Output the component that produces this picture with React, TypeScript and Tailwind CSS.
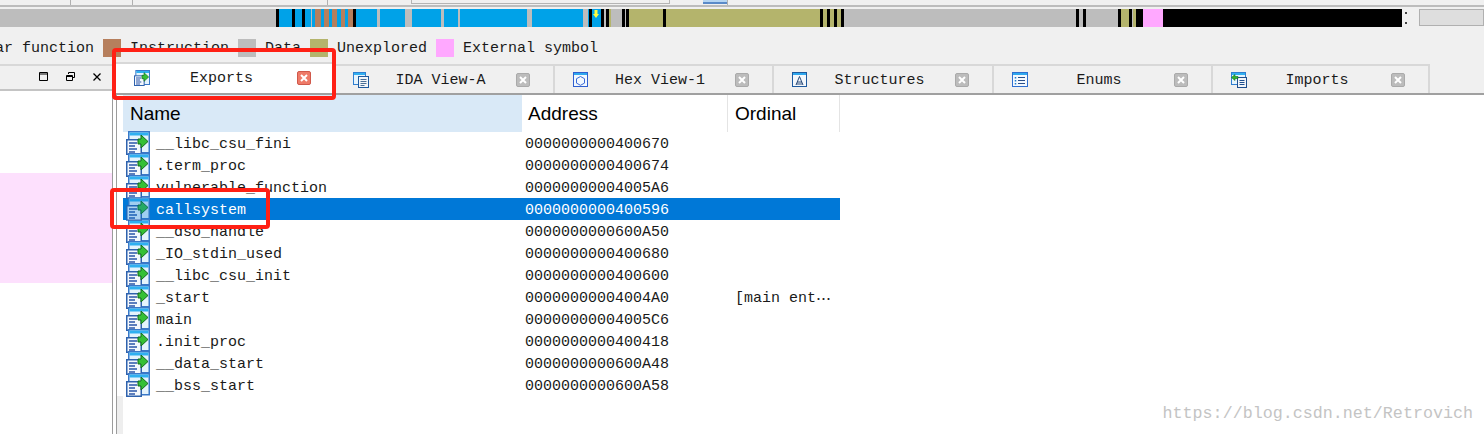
const BLUE = '#00a2e8';
const GRAY = '#bdbdbd';
const BROWN = '#b67f5d';
const KHAKI = '#b4b46c';
const PINK = '#ffa8ff';
const BLACK = '#000000';

// colour, end x of each navigator band
const bands: [string, number][] = [
  [GRAY, 276], [BLACK, 279], [BLUE, 292], [BLACK, 295], [BLUE, 302], [BLACK, 305], [BLUE, 311], [GRAY, 312],
  [BLUE, 315], [BROWN, 321], [BLUE, 324], [BROWN, 329], [BLUE, 332], [BROWN, 337], [BLUE, 341], [BROWN, 345],
  [BLUE, 348], [BROWN, 353], [BLACK, 356], [BLUE, 377], [GRAY, 380], [BLUE, 405], [GRAY, 412], [BLUE, 441],
  [GRAY, 444], [BLUE, 458], [GRAY, 460], [BLUE, 527], [GRAY, 532], [BLUE, 583], [GRAY, 588], [BLUE, 589],
  [BLACK, 592], [BLUE, 601], [BLACK, 604], [GRAY, 606], [BLACK, 609], [KHAKI, 611], [GRAY, 622], [BLACK, 625],
  [GRAY, 626], [BLACK, 629], [KHAKI, 663], [BLACK, 666], [KHAKI, 820], [BLACK, 823], [KHAKI, 827], [BLACK, 830],
  [KHAKI, 834], [BLACK, 837], [KHAKI, 841], [BLACK, 844], [GRAY, 1076], [BLACK, 1079], [GRAY, 1083], [BLACK, 1086],
  [GRAY, 1118], [BLACK, 1121], [KHAKI, 1129], [BLACK, 1132], [GRAY, 1133], [KHAKI, 1136], [BLACK, 1143],
  [PINK, 1163], [BLACK, 1402],
];

const legend = [
  { label: 'Regular function', color: '' },
  { label: 'Instruction', color: BROWN },
  { label: 'Data', color: GRAY },
  { label: 'Unexplored', color: KHAKI },
  { label: 'External symbol', color: PINK },
];

const rows = [
  { name: '__libc_csu_fini', address: '0000000000400670' },
  { name: '.term_proc', address: '0000000000400674' },
  { name: 'vulnerable_function', address: '00000000004005A6' },
  { name: 'callsystem', address: '0000000000400596', selected: true },
  { name: '__dso_handle', address: '0000000000600A50' },
  { name: '_IO_stdin_used', address: '0000000000400680' },
  { name: '__libc_csu_init', address: '0000000000400600' },
  { name: '_start', address: '00000000004004A0', ordinal: '[main ent' },
  { name: 'main', address: '00000000004005C6' },
  { name: '.init_proc', address: '0000000000400418' },
  { name: '__data_start', address: '0000000000600A48' },
  { name: '__bss_start', address: '0000000000600A58' },
];

function ExportIcon({ size = 24, selected = false }: { size?: number; selected?: boolean }) {
  return (
    <svg width={size} height={size} viewBox="0 0 24 24" className={selected ? 'shrink-0 opacity-70' : 'shrink-0'}>
      <rect x="2.750" y="0.750" width="20.500" height="21" fill="#e4f3fc" stroke="#3a78c8" strokeWidth="1.500" />
      <rect x="3.500" y="1.500" width="19" height="3" fill="#2fb0f0" />
      <rect x="0.750" y="8.750" width="14.500" height="14.500" fill="#f4f8fc" stroke="#2f62ad" strokeWidth="1.500" />
      <path d="M3 12h8M3 15h6M3 18h8M3 21h6" stroke="#2a55a8" strokeWidth="1.500" />
      <path d="M12 8h3V4l7 6.500L15 17v-4h-3z" fill="#35c035" stroke="#126b1c" />
    </svg>
  );
}

function WindowIcon({ kind }: { kind: string }) {
  if (kind === 'doc') {
    return (
      <svg width="16" height="16" viewBox="0 0 16 16" className="shrink-0">
        <rect x="0.500" y="0.500" width="12" height="12" fill="#e6f4fd" stroke="#2f7fd0" />
        <rect x="1" y="1" width="11" height="2" fill="#32b0f0" />
        <rect x="5.500" y="4.500" width="10" height="11" fill="#f3f6f9" stroke="#1f5a9e" />
        <path d="M7.500 7.500h6M7.500 9.500h6M7.500 11.500h6M7.500 13.500h4" stroke="#4a6f96" />
      </svg>
    );
  }
  if (kind === 'hex') {
    return (
      <svg width="16" height="16" viewBox="0 0 16 16" className="shrink-0">
        <rect x="0.500" y="0.500" width="14" height="14" fill="#f2f8fe" stroke="#2f5fd0" />
        <rect x="1" y="1" width="13" height="2" fill="#2fa8ee" />
        <path d="M7.500 4.500l4 2.200v4.400l-4 2.200-4-2.200V6.700z" fill="none" stroke="#3a6ad8" />
      </svg>
    );
  }
  if (kind === 'struct') {
    return (
      <svg width="16" height="16" viewBox="0 0 16 16" className="shrink-0">
        <rect x="0.500" y="0.500" width="14" height="14" fill="#f4f8fc" stroke="#1f5a9e" />
        <rect x="1" y="1" width="13" height="2" fill="#2fa8ee" />
        <path d="M4 13L7.500 4.500 11 13M5 10h5M4.500 12h6" fill="none" stroke="#2a4a78" />
      </svg>
    );
  }
  if (kind === 'enum') {
    return (
      <svg width="16" height="16" viewBox="0 0 16 16" className="shrink-0">
        <rect x="0.500" y="0.500" width="15" height="14" fill="#f4f9fe" stroke="#2f6fd0" />
        <rect x="1" y="1" width="14" height="2" fill="#2fa8ee" />
        <path d="M3.500 5v1.500M3.500 8v1.500M3.500 11v1.500" stroke="#1f7fd0" strokeWidth="1.500" />
        <path d="M6 5.500h7M6 8.500h7M6 11.500h7" stroke="#2a4f8a" />
      </svg>
    );
  }
  if (kind === 'imports') {
    return (
      <svg width="16" height="16" viewBox="0 0 16 16" className="shrink-0">
        <rect x="0.500" y="0.500" width="14" height="12" fill="#e6f4fd" stroke="#2f7fd0" />
        <rect x="1" y="1" width="13" height="2" fill="#32b0f0" />
        <rect x="6.500" y="5.500" width="9" height="10" fill="#f3f6f9" stroke="#1f4f8e" />
        <path d="M8.500 8.500h5M8.500 10.500h5M8.500 12.500h5" stroke="#1f4f8e" />
        <path d="M7 4.500H4V2.500L0.500 5.500 4 8.500V6.500H7z" fill="#2fb52f" stroke="#126b1c" strokeWidth="0.600" />
      </svg>
    );
  }
  return <ExportIcon size={16} />;
}

function CloseBox({ active = false }: { active?: boolean }) {
  return (
    <span
      className={
        active
          ? 'flex h-[14px] w-[14px] shrink-0 items-center justify-center rounded-[2px] border border-[#d0584a] bg-[#ee7a68]'
          : 'flex h-[14px] w-[14px] shrink-0 items-center justify-center rounded-[2px] border border-[#aaaaaa] bg-[#bcbcbc]'
      }
    >
      <svg width="8" height="8" viewBox="0 0 8 8">
        <path d="M1 1l6 6M7 1L1 7" stroke="#ffffff" strokeWidth="2" />
      </svg>
    </span>
  );
}

function Tab({ label, kind, width, active = false }: { label: string; kind: string; width: string; active?: boolean }) {
  return (
    <div
      className={
        active
          ? `flex h-[33px] ${width} items-center border-t-2 border-[#d8d8d8] bg-white pb-[3px] pl-[19px] pr-[24px]`
          : `flex h-[31px] ${width} items-center border-r-2 border-t-2 border-[#d8d8d8] pb-[1px] pl-[18px] pr-[23px]`
      }
    >
      <WindowIcon kind={kind} />
      <span className="flex-1 pr-[4px] text-center text-[15px] leading-none text-[#1a1a1a]">{label}</span>
      <CloseBox active={active} />
    </div>
  );
}

export default function App() {
  let prev = 0;
  const segments = bands.map(([color, end]) => {
    const width = end - prev;
    prev = end;
    return { color, width };
  });

  return (
    <div className="relative h-[434px] w-[1484px] overflow-hidden bg-[#f0f0f0] font-['Liberation_Mono',monospace] text-[15px] text-[#1a1a1a]">
      {/* top toolbar remains */}
      <div className="flex h-[7px] border-b-2 border-[#bcbcbc]">
        <div className="h-[5px] w-[71px] border-r border-[#b0b0b0]" />
        <div className="h-[5px] w-[62px] border-r border-[#b0b0b0]" />
        <div className="h-[5px] w-[195px] border-r border-[#b0b0b0]" />
        <div className="h-[4px] w-[83px]" />
        <div className="h-[4px] w-[259px] border-x border-b border-[#b4b4b4]" />
        <div className="h-[4px] w-[33px]" />
        <div className="h-[4px] w-[24px] border-b-2 border-[#5a8ac8] bg-[#b5d5f2]" />
        <div className="h-[5px] w-[1px] bg-[#b0b0b0]" />
      </div>

      {/* navigator */}
      <div className="relative mt-[2px] flex h-[18px]">
        {segments.map((seg, i) => (
          <div key={i} className="h-full" style={{ width: seg.width, backgroundColor: seg.color }} />
        ))}
        <div className="ml-[3px] flex h-full w-[2px] flex-col justify-between py-[3px]">
          <div className="h-[2px] w-[2px] bg-[#444444]" />
          <div className="h-[2px] w-[2px] bg-[#444444]" />
        </div>
        <div className="ml-[12px] h-[17px] flex-1 border border-[#b0b0b0] bg-[#dedede]" />
        <svg width="6" height="8" viewBox="0 0 6 8" className="absolute left-[593px] top-[1px]">
          <path d="M1.500 0h3v4H6L3 8 0 4h1.500z" fill="#ffff40" />
        </svg>
      </div>

      {/* legend */}
      <div className="ml-[-50px] flex h-[37px] items-center whitespace-nowrap pt-[5px]">
        {legend.map((item) => (
          <div key={item.label} className="flex items-center">
            {item.color && (
              <span className="mx-[9px] h-[18px] w-[18px]" style={{ backgroundColor: item.color }} />
            )}
            <span className="leading-none">{item.label}</span>
          </div>
        ))}
      </div>

      <div className="flex h-[370px]">
        {/* left pane */}
        <div className="flex w-[112px] flex-col">
          <div className="flex h-[27px] items-center justify-end gap-[18px] border-b-2 border-t-2 border-b-[#c4c4c4] border-t-[#d8d8d8] pb-[2px] pr-[11px]">
            <svg width="9" height="9" viewBox="0 0 9 9">
              <path d="M.5.500h8v8h-8zM.5 2h8" fill="none" stroke="#000000" />
            </svg>
            <svg width="9" height="9" viewBox="0 0 9 9">
              <path d="M2.500 2V.500h6v5H7M.5 3.500h6v5h-6zM.5 4.500h6" fill="none" stroke="#000000" />
            </svg>
            <svg width="8" height="8" viewBox="0 0 8 8">
              <path d="M.5.500l7 7M7.500.500l-7 7" stroke="#000000" strokeWidth="1.300" />
            </svg>
          </div>
          <div className="flex-1 bg-white pt-[82px]">
            <div className="h-[110px] bg-[#fde0fd]" />
          </div>
        </div>

        {/* right pane */}
        <div className="flex flex-1 flex-col">
          <div className="relative z-10 -mt-[2px] flex h-[33px] items-end">
            <div className="absolute inset-x-0 bottom-0 h-[2px] bg-[#a0a0a0]" />
            <div className="w-[3px]" />
            <Tab label="Exports" kind="export" width="w-[220px]" active />
            <Tab label="IDA View-A" kind="doc" width="w-[220px]" />
            <Tab label="Hex View-1" kind="hex" width="w-[219px]" />
            <Tab label="Structures" kind="struct" width="w-[220px]" />
            <Tab label="Enums" kind="enum" width="w-[219px]" />
            <Tab label="Imports" kind="imports" width="w-[217px]" />
          </div>

          <div className="flex min-h-0 flex-1 bg-white">
            <div className="w-[5px] border-x border-[#9c9c9c]" />
            <div className="w-[6px] bg-[#eeeeee]">
              <div className="h-[301px] bg-white" />
            </div>
            <div className="w-[717px]">
              <div className="flex h-[37px] items-center font-['Liberation_Sans',sans-serif] text-[19px] leading-none text-black">
                <div className="flex h-full w-[399px] items-center bg-[#d9e9f7] pl-[7px]">Name</div>
                <div className="flex h-full w-[206px] items-center border-r border-[#e4e4e4] pl-[6px]">Address</div>
                <div className="flex h-full w-[112px] items-center border-r border-[#e4e4e4] pl-[7px]">Ordinal</div>
              </div>
              {rows.map((row) => (
                <div
                  key={row.name}
                  className={
                    row.selected
                      ? 'flex h-[22px] items-center bg-[#0078d7] text-white'
                      : 'flex h-[22px] items-center text-[#1a1a1a]'
                  }
                >
                  <div className="flex w-[402px] items-center gap-[6px] pl-[3px]">
                    <div className="-my-px">
                      <ExportIcon selected={row.selected} />
                    </div>
                    <span className="pt-[2px] leading-none">{row.name}</span>
                  </div>
                  <div className="w-[210px] pt-[2px] leading-none">{row.address}</div>
                  {row.ordinal && (
                    <div className="flex items-center pt-[2px] leading-none">
                      {row.ordinal}
                      <span className="font-['Noto_Sans_CJK_SC',sans-serif]">⋯</span>
                    </div>
                  )}
                </div>
              ))}
            </div>
          </div>
        </div>
      </div>

      {/* red annotations */}
      <div className="absolute left-[112px] top-[48px] z-20 h-[52px] w-[224px] rounded-[4px] border-4 border-[#ff2015]" />
      <div className="absolute left-[110px] top-[188px] z-20 h-[41px] w-[160px] rounded-[4px] border-4 border-[#ff2015]" />

      {/* watermark */}
      <div className="absolute right-[11px] top-[405px] text-[16.7px] leading-[18px] text-[#c4c4c4]">
        https://blog.csdn.net/Retrovich
      </div>
    </div>
  );
}
